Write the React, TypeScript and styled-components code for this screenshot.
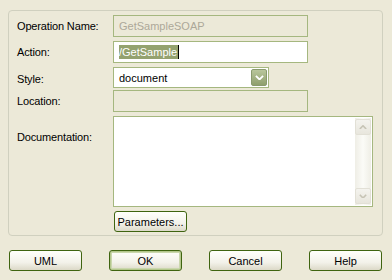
import React from "react";
import styled, { createGlobalStyle } from "styled-components";

const Global = createGlobalStyle`
  html, body { margin: 0; padding: 0; background: #ece9d8; }
  body { font-family: "Liberation Sans", Arial, sans-serif; font-size: 11px; color: #000; }
  * { box-sizing: border-box; }
`;

const Dialog = styled.div`
  width: 392px;
  height: 280px;
  background: #ece9d8;
  padding: 10px 9px 0 8px;
  display: flex;
  flex-direction: column;
`;

const Panel = styled.div`
  width: 375px;
  height: 226px;
  border: 1px solid #d0d0bf;
  border-radius: 4px;
  padding: 4px 0 0 8px;
  display: grid;
  grid-template-columns: 96px 1fr;
  grid-auto-rows: auto;
  align-content: start;
  row-gap: 4px;
  align-items: center;
`;

const Label = styled.div<{ $top?: number }>`
  white-space: nowrap;
  align-self: ${(p) => (p.$top !== undefined ? "start" : "center")};
  padding-top: ${(p) => (p.$top !== undefined ? `${p.$top}px` : "0")};
  letter-spacing: -0.15px;
`;

const Field = styled.div<{ $disabled?: boolean; $w: number }>`
  width: ${(p) => p.$w}px;
  height: 22px;
  border: 1px solid #a5b77f;
  background: ${(p) => (p.$disabled ? "#ece9d8" : "#fff")};
  color: ${(p) => (p.$disabled ? "#aca899" : "#000")};
  display: flex;
  align-items: center;
  padding-left: 5px;
  white-space: nowrap;
`;

const Selection = styled.span`
  background: #94a26f;
  color: #fff;
  line-height: 14px;
  padding-right: 1px;
`;

const Caret = styled.span`
  display: inline-block;
  width: 1px;
  height: 14px;
  background: #000;
`;

const Combo = styled.div`
  width: 156px;
  height: 21px;
  border: 1px solid #a5b77f;
  background: #fff;
  display: flex;
  align-items: center;
  padding: 1px;
  margin: 0 0 -2px;
  align-self: start;
`;

const ComboText = styled.div`
  flex: 1;
  padding-left: 4px;
`;

const ComboButton = styled.div`
  width: 16px;
  height: 17px;
  border: 1px solid #8a9a6e;
  border-radius: 2px;
  background: linear-gradient(#b9c69c, #8f9f6d);
  display: flex;
  align-items: center;
  justify-content: center;
`;

const TextArea = styled.div`
  width: 260px;
  height: 91px;
  border: 1px solid #a5b77f;
  background: #fff;
  display: flex;
  justify-content: flex-end;
  padding: 1px;
`;

const ScrollBar = styled.div`
  width: 16px;
  height: 100%;
  background: linear-gradient(90deg, #efeee6, #fbfbf7 50%, #efeee6);
  display: flex;
  flex-direction: column;
  justify-content: space-between;
  padding-top: 1px;
  padding-bottom: 1px;
`;

const ScrollBtn = styled.div`
  width: 16px;
  height: 16px;
  border: 1px solid #e2e0d6;
  border-radius: 2px;
  background: linear-gradient(#f4f3ee, #e8e6dd);
  display: flex;
  align-items: center;
  justify-content: center;
`;

const Button = styled.button<{ $default?: boolean }>`
  width: 73px;
  height: 21px;
  border: 1px solid #3f6410;
  border-radius: 3px;
  background: linear-gradient(#fffffb, #f3f2ea 60%, #dcd9c8);
  font-family: "Liberation Sans", Arial, sans-serif;
  font-size: 11px;
  color: #000;
  padding: 0;
  display: block;
  box-shadow: ${(p) =>
    p.$default ? "inset 0 0 0 1px #b4c78c, inset 0 0 0 2px #cad7ad" : "none"};
`;

const ButtonCell = styled.div`
  display: flex;
  padding-left: 1px;
`;

const Footer = styled.div`
  margin-top: 14px;
  margin-left: 1px;
  width: 373px;
  display: flex;
  justify-content: space-between;
`;

const Empty = styled.div``;

const Chevron = ({ up, color, w }: { up?: boolean; color: string; w: number }) => (
  <svg width={w} height={w * 0.6} viewBox="0 0 10 6">
    <path
      d={up ? "M1 5 L5 1 L9 5" : "M1 1 L5 5 L9 1"}
      fill="none"
      stroke={color}
      strokeWidth={2}
    />
  </svg>
);

export default function App() {
  return (
    <>
      <Global />
      <Dialog>
        <Panel>
          <Label>Operation Name:</Label>
          <Field $disabled $w={195}>GetSampleSOAP</Field>

          <Label>Action:</Label>
          <Field $w={195}>
            <Selection>/GetSample</Selection>
            <Caret />
          </Field>

          <Label $top={6}>Style:</Label>
          <Combo>
            <ComboText>document</ComboText>
            <ComboButton>
              <Chevron color="#fff" w={9} />
            </ComboButton>
          </Combo>

          <Label>Location:</Label>
          <Field $disabled $w={195} />

          <Label $top={15}>Documentation:</Label>
          <TextArea>
            <ScrollBar>
              <ScrollBtn>
                <Chevron up color="#c6c3b5" w={8} />
              </ScrollBtn>
              <ScrollBtn>
                <Chevron color="#c6c3b5" w={8} />
              </ScrollBtn>
            </ScrollBar>
          </TextArea>

          <Empty />
          <ButtonCell>
            <Button>Parameters...</Button>
          </ButtonCell>
        </Panel>
        <Footer>
          <Button>UML</Button>
          <Button $default>OK</Button>
          <Button>Cancel</Button>
          <Button>Help</Button>
        </Footer>
      </Dialog>
    </>
  );
}
